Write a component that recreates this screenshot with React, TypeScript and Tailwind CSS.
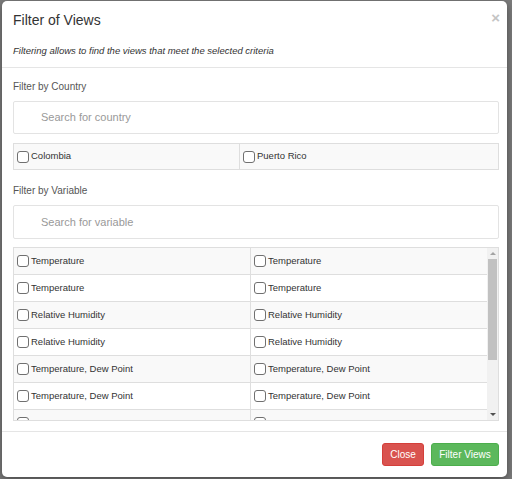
const countries = ['Colombia', 'Puerto Rico'];

const variables = [
  ['Temperature', 'Temperature'],
  ['Temperature', 'Temperature'],
  ['Relative Humidity', 'Relative Humidity'],
  ['Relative Humidity', 'Relative Humidity'],
  ['Temperature, Dew Point', 'Temperature, Dew Point'],
  ['Temperature, Dew Point', 'Temperature, Dew Point'],
  ['Temperature', 'Temperature'],
];

function Box() {
  return <span className="inline-block w-[12px] h-[12px] border border-[#707070] rounded-[3px] bg-white shrink-0" />;
}

function Check({ label }: { label: string }) {
  return (
    <div className="flex items-center gap-[2px] text-[9.5px] text-[#333]">
      <Box />
      <span>{label}</span>
    </div>
  );
}

export default function App() {
  return (
    <div className="w-[512px] h-[479px] bg-[#7b7b7b] pt-[1px] pl-[2px] font-['Liberation_Sans',Arial,sans-serif] overflow-hidden">
      <div className="w-[505px] h-[476px] bg-white rounded-[5px] shadow-[0_3px_9px_rgba(0,0,0,0.4)] flex flex-col">
        {/* header */}
        <div className="h-[67px] border-b border-[#e5e5e5] pl-[11px] pr-[8px] pt-[11px] relative">
          <h4 className="text-[14px] leading-[16px] text-[#333]">Filter of Views</h4>
          <p className="mt-[17px] text-[9.5px] leading-[12px] italic text-[#333]">
            Filtering allows to find the views that meet the selected criteria
          </p>
          <span className="absolute right-[7px] top-[8px] text-[15px] font-bold text-[#c4c4c4] leading-[18px]">×</span>
        </div>

        {/* body */}
        <div className="pl-[11px] pr-[8px] pt-[13px] flex flex-col">
          <div className="text-[10px] leading-[12px] text-[#555]">Filter by Country</div>
          <div className="mt-[8px] h-[33px] border border-[#e3e3e3] rounded-[2px] flex items-center pl-[27px] text-[11px] text-[#999]">
            Search for country
          </div>
          <div className="mt-[9px] h-[27px] border border-[#dedede] bg-[#f9f9f9] flex">
            <div className="w-[226px] border-r border-[#dedede] flex items-center pl-[3px]">
              <Check label={countries[0]} />
            </div>
            <div className="flex-1 flex items-center pl-[3px]">
              <Check label={countries[1]} />
            </div>
          </div>

          <div className="mt-[15px] text-[10px] leading-[12px] text-[#555]">Filter by Variable</div>
          <div className="mt-[8px] h-[34px] border border-[#e3e3e3] rounded-[2px] flex items-center pl-[27px] text-[11px] text-[#999]">
            Search for variable
          </div>

          <div className="mt-[8px] h-[174px] border border-[#dedede] flex overflow-hidden">
            <div className="flex-1 flex flex-col">
              {variables.map((row, i) => (
                <div
                  key={i}
                  className={`h-[27px] shrink-0 flex border-b border-[#dedede] ${i % 2 === 0 ? 'bg-[#f9f9f9]' : 'bg-white'}`}
                >
                  <div className="w-[237px] border-r border-[#dedede] flex items-center pl-[3px]">
                    <Check label={row[0]} />
                  </div>
                  <div className="flex-1 flex items-center pl-[3px]">
                    <Check label={row[1]} />
                  </div>
                </div>
              ))}
            </div>
            {/* scrollbar */}
            <div className="w-[11px] bg-[#f1f1f1] flex flex-col items-center">
              <div className="h-[11px] flex items-center justify-center">
                <span className="w-0 h-0 border-l-[3px] border-r-[3px] border-b-[3px] border-l-transparent border-r-transparent border-b-[#a3a3a3]" />
              </div>
              <div className="w-[9px] h-[101px] bg-[#c1c1c1]" />
              <div className="flex-1" />
              <div className="h-[11px] flex items-center justify-center">
                <span className="w-0 h-0 border-l-[3px] border-r-[3px] border-t-[3px] border-l-transparent border-r-transparent border-t-[#505050]" />
              </div>
            </div>
          </div>
        </div>

        {/* footer */}
        <div className="mt-[10px] border-t border-[#e5e5e5] flex-1 flex items-center justify-end gap-[7px] pr-[8px]">
          <button className="w-[42px] h-[23px] rounded-[3px] bg-[#d9534f] border border-[#d43f3a] text-white text-[10px]">
            Close
          </button>
          <button className="w-[68px] h-[23px] rounded-[3px] bg-[#5cb85c] border border-[#4cae4c] text-white text-[10px]">
            Filter Views
          </button>
        </div>
      </div>
    </div>
  );
}
